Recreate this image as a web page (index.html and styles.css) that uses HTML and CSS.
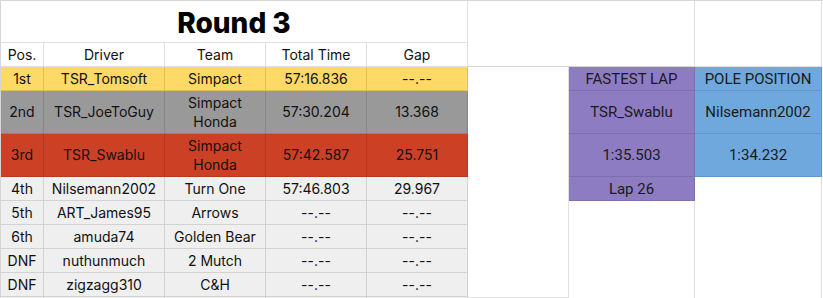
FILE: index.html
```html
<!DOCTYPE html>
<html>
<head>
<meta charset="utf-8">
<link rel="stylesheet" href="styles.css">
</head>
<body>
<div class="sheet">
  <div class="results">
    <div class="cell title span5">Round 3</div>
    <div class="cell hd">Pos.</div>
    <div class="cell hd">Driver</div>
    <div class="cell hd">Team</div>
    <div class="cell hd">Total Time</div>
    <div class="cell hd">Gap</div>

    <div class="cell gold">1st</div>
    <div class="cell gold">TSR_Tomsoft</div>
    <div class="cell gold">Simpact</div>
    <div class="cell gold">57:16.836</div>
    <div class="cell gold">--.--</div>

    <div class="cell silver">2nd</div>
    <div class="cell silver">TSR_JoeToGuy</div>
    <div class="cell silver wrap">Simpact<br>Honda</div>
    <div class="cell silver">57:30.204</div>
    <div class="cell silver">13.368</div>

    <div class="cell bronze">3rd</div>
    <div class="cell bronze">TSR_Swablu</div>
    <div class="cell bronze wrap">Simpact<br>Honda</div>
    <div class="cell bronze">57:42.587</div>
    <div class="cell bronze">25.751</div>

    <div class="cell rest">4th</div>
    <div class="cell rest">Nilsemann2002</div>
    <div class="cell rest">Turn One</div>
    <div class="cell rest">57:46.803</div>
    <div class="cell rest">29.967</div>

    <div class="cell rest">5th</div>
    <div class="cell rest">ART_James95</div>
    <div class="cell rest">Arrows</div>
    <div class="cell rest">--.--</div>
    <div class="cell rest">--.--</div>

    <div class="cell rest">6th</div>
    <div class="cell rest">amuda74</div>
    <div class="cell rest">Golden Bear</div>
    <div class="cell rest">--.--</div>
    <div class="cell rest">--.--</div>

    <div class="cell rest">DNF</div>
    <div class="cell rest">nuthunmuch</div>
    <div class="cell rest">2 Mutch</div>
    <div class="cell rest">--.--</div>
    <div class="cell rest">--.--</div>

    <div class="cell rest">DNF</div>
    <div class="cell rest">zigzagg310</div>
    <div class="cell rest">C&amp;H</div>
    <div class="cell rest">--.--</div>
    <div class="cell rest">--.--</div>

    <div class="cell rest stub"></div>
    <div class="cell rest stub"></div>
    <div class="cell rest stub"></div>
    <div class="cell rest stub"></div>
    <div class="cell rest stub"></div>
  </div>

  <div class="extras">
    <div class="cell blank top-wide"></div>
    <div class="cell blank top-right"></div>
    <div class="cell blank gutter"></div>
    <div class="cell fl">FASTEST LAP</div>
    <div class="cell pp">POLE POSITION</div>
    <div class="cell fl">TSR_Swablu</div>
    <div class="cell pp">Nilsemann2002</div>
    <div class="cell fl">1:35.503</div>
    <div class="cell pp">1:34.232</div>
    <div class="cell fl">Lap 26</div>
    <div class="cell blank under-pp"></div>
    <div class="cell blank under-fl"></div>
  </div>
</div>
</body>
</html>
```

FILE: styles.css
```css
* { box-sizing: border-box; }

html, body {
  margin: 0;
  padding: 0;
  background: #ffffff;
  overflow: hidden;
}

.sheet {
  display: flex;
  align-items: flex-start;
  border-top: 1px solid #d6d6d6;
  border-left: 1px solid #d6d6d6;
  width: 823px;
  height: 298px;
  overflow: hidden;
}

.results {
  display: grid;
  grid-template-columns: 43px 121px 101px 101px 101px;
  grid-template-rows: 42px 24px 24px 43px 43px 24px 24px 24px 24px 24px 1px;
}

.cell {
  display: flex;
  align-items: center;
  justify-content: center;
  text-align: center;
  border-right: 1px solid rgba(0, 0, 0, 0.12);
  border-bottom: 1px solid rgba(0, 0, 0, 0.12);
  font-family: Inter, "Liberation Sans", sans-serif;
  font-size: 14px;
  color: #111;
  white-space: nowrap;
  line-height: 18px;
}

.stub { border-bottom: none; }

.span5 { grid-column: 1 / span 5; }

.title {
  font-size: 28px;
  font-weight: 800;
  color: #000;
  padding-top: 2px;
}

.hd { background: #ffffff; }
.gold { background: #ffd966; }
.silver { background: #999999; }
.bronze { background: #cc4125; }
.rest { background: #efefef; }

.wrap { line-height: 19px; }

.extras {
  display: grid;
  grid-template-columns: 101px 126px 127px;
  grid-template-rows: 66px 24px 43px 43px 24px 97px;
}

.extras .cell {
  font-family: Roboto, "Liberation Sans", sans-serif;
  font-size: 15px;
  color: #1a1a1a;
}

.blank { background: #ffffff; }
.top-wide { grid-column: 1 / span 2; border-bottom-color: #d6d6d6; }
.top-right { grid-column: 3; }
.gutter { grid-column: 1; grid-row: 2 / span 5; }
.under-pp { grid-column: 3; grid-row: 5 / span 2; border-bottom: none; }
.under-fl { grid-column: 2; grid-row: 6; border-bottom: none; }

.fl {
  background: #8e7cc3;
  border-color: rgba(0, 0, 0, 0.1);
}
.pp {
  background: #6fa8dc;
  border-color: rgba(0, 0, 0, 0.1);
}
```
